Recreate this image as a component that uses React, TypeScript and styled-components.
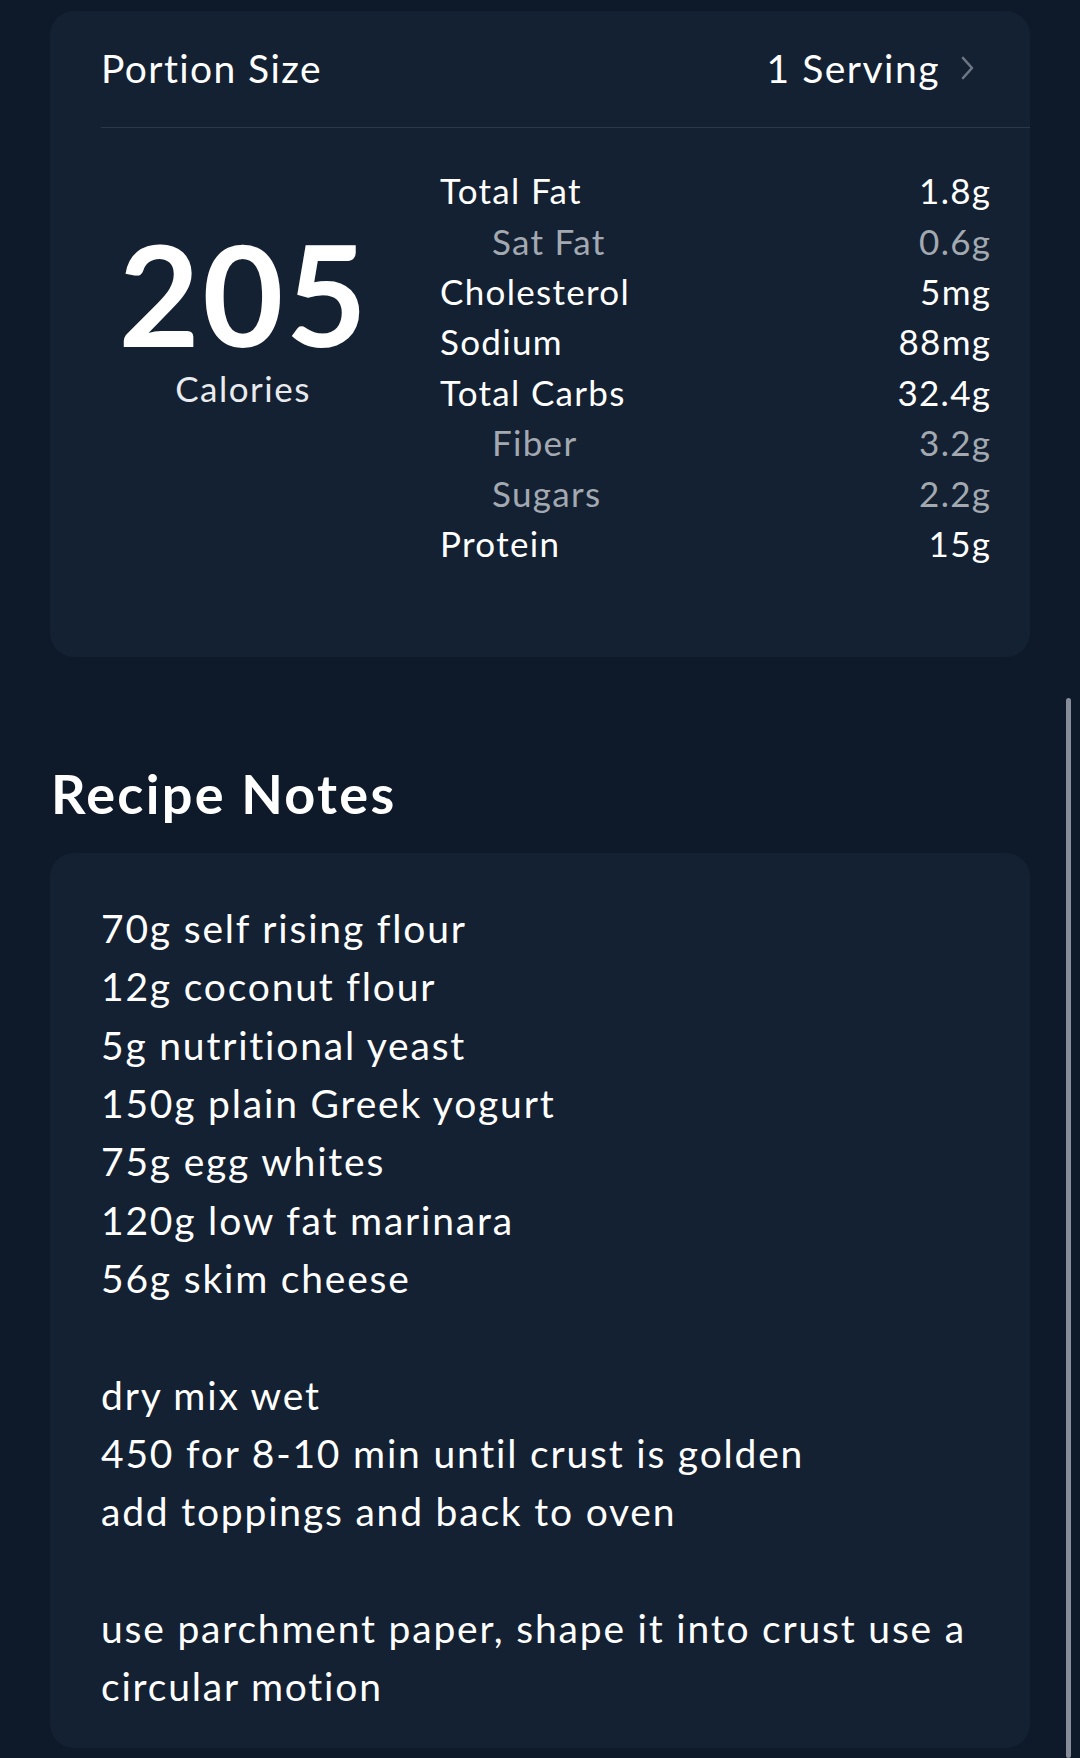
import React from "react";
import styled, { createGlobalStyle } from "styled-components";

const Global = createGlobalStyle`
  html, body {
    margin: 0;
    padding: 0;
    background: #0e1a29;
  }
  body {
    font-family: Lato, "Noto Sans", "Liberation Sans", sans-serif;
    color: #ffffff;
    -webkit-font-smoothing: antialiased;
  }
`;

const Page = styled.div`
  position: relative;
  min-height: 1758px;
  padding: 11px 50px 10px 50px;
  box-sizing: border-box;
  display: flex;
  flex-direction: column;
`;

const Card = styled.section`
  background: #142132;
  border-radius: 24px;
  padding-left: 51px;
  display: flex;
  flex-direction: column;
`;

const HeaderRow = styled.div`
  height: 117px;
  display: flex;
  align-items: center;
  justify-content: space-between;
  padding-right: 54px;
  border-bottom: 1.5px solid #2b3848;
  box-sizing: border-box;
`;

const HeaderLabel = styled.span`
  font-size: 39px;
  font-weight: 400;
  letter-spacing: 1.4px;
  margin-top: -2px;
`;

const HeaderValue = styled.span`
  display: flex;
  align-items: center;
  gap: 20px;
  font-size: 39px;
  letter-spacing: 1.5px;
  margin-top: -2px;
`;

const Chevron = styled.svg`
  width: 16px;
  height: 28px;
`;

const NutritionBody = styled.div`
  display: flex;
  padding: 37px 40px 89px 0;
  margin-left: -51px;
`;

const CaloriesCol = styled.div`
  width: 386px;
  display: flex;
  flex-direction: column;
  align-items: center;
  padding-top: 58px;
`;

const CaloriesNumber = styled.div`
  font-size: 140px;
  font-weight: 700;
  line-height: 1;
  letter-spacing: 2.5px;
  padding-left: 2px;
`;

const CaloriesLabel = styled.div`
  font-size: 35px;
  line-height: 1;
  margin-top: 8px;
  letter-spacing: 1.5px;
  color: #e9ebee;
`;

const MacroTable = styled.div`
  flex: 1;
  display: flex;
  flex-direction: column;
  margin-left: 4px;
`;

const MacroRow = styled.div<{ $sub?: boolean }>`
  height: 50.4px;
  display: flex;
  align-items: center;
  justify-content: space-between;
  font-size: 35px;
  letter-spacing: 1.3px;
  padding-left: ${(p) => (p.$sub ? "52px" : "0")};
  color: ${(p) => (p.$sub ? "#a3a9b1" : "#ffffff")};
`;

const MacroValue = styled.span`
  margin-right: -1.3px;
`;

const SectionTitle = styled.h2`
  margin: 0;
  padding: 0 0 0 1px;
  height: 196px;
  display: flex;
  align-items: center;
  padding-top: 76px;
  box-sizing: border-box;
  font-size: 54px;
  font-weight: 700;
  letter-spacing: 2.3px;
`;

const NotesCard = styled.section`
  background: #142132;
  border-radius: 24px;
  padding: 46px 30px 33px 51px;
`;

const NoteLine = styled.div`
  font-size: 39px;
  line-height: 58.3px;
  min-height: 58.3px;
  letter-spacing: 1.8px;
  white-space: nowrap;
`;

const ScrollThumb = styled.div`
  position: absolute;
  left: 1066px;
  top: 698px;
  width: 5px;
  bottom: 0;
  border-radius: 3px;
  background: #878e99;
`;

const macros: { label: string; value: string; sub?: boolean }[] = [
  { label: "Total Fat", value: "1.8g" },
  { label: "Sat Fat", value: "0.6g", sub: true },
  { label: "Cholesterol", value: "5mg" },
  { label: "Sodium", value: "88mg" },
  { label: "Total Carbs", value: "32.4g" },
  { label: "Fiber", value: "3.2g", sub: true },
  { label: "Sugars", value: "2.2g", sub: true },
  { label: "Protein", value: "15g" },
];

const notes = [
  "70g self rising flour",
  "12g coconut flour",
  "5g nutritional yeast",
  "150g plain Greek yogurt",
  "75g egg whites",
  "120g low fat marinara",
  "56g skim cheese",
  "",
  "dry mix wet",
  "450 for 8-10 min until crust is golden",
  "add toppings and back to oven",
  "",
  "use parchment paper, shape it into crust use a",
  "circular motion",
];

export default function App() {
  return (
    <>
      <Global />
      <Page>
        <Card>
          <HeaderRow>
            <HeaderLabel>Portion Size</HeaderLabel>
            <HeaderValue>
              1 Serving
              <Chevron viewBox="0 0 16 28" fill="none">
                <path d="M3 4 L12 14 L3 24" stroke="#6d7682" strokeWidth="2.6" strokeLinecap="round" strokeLinejoin="round" />
              </Chevron>
            </HeaderValue>
          </HeaderRow>
          <NutritionBody>
            <CaloriesCol>
              <CaloriesNumber>205</CaloriesNumber>
              <CaloriesLabel>Calories</CaloriesLabel>
            </CaloriesCol>
            <MacroTable>
              {macros.map((m) => (
                <MacroRow key={m.label} $sub={m.sub}>
                  <span>{m.label}</span>
                  <MacroValue>{m.value}</MacroValue>
                </MacroRow>
              ))}
            </MacroTable>
          </NutritionBody>
        </Card>
        <SectionTitle>Recipe Notes</SectionTitle>
        <NotesCard>
          {notes.map((n, i) => (
            <NoteLine key={i}>{n}</NoteLine>
          ))}
        </NotesCard>
        <ScrollThumb />
      </Page>
    </>
  );
}
